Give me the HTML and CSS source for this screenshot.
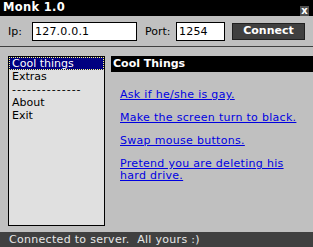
FILE: index.html
```html
<!DOCTYPE html>
<html lang="en">

<head>
  <meta charset="UTF-8" />
  <title>Monk 1.0</title>
  <link rel="stylesheet" href="styles.css">
</head>

<body>
  <div class="window">
    <header class="titlebar">
      <span class="title">Monk 1.0</span>
      <span class="close">x</span>
    </header>

    <form class="toolbar">
      <label for="ip" class="lbl-ip">Ip:</label>
      <input type="text" id="ip" class="field field-ip" value="127.0.0.1" />
      <label for="port" class="lbl-port">Port:</label>
      <input type="text" id="port" class="field field-port" value="1254" />
      <button type="button" class="connect">Connect</button>
    </form>

    <main class="main">
      <ul class="menu">
        <li class="selected">Cool things</li>
        <li>Extras</li>
        <li class="divider">--------------</li>
        <li>About</li>
        <li>Exit</li>
      </ul>

      <section class="panel">
        <h2>Cool Things</h2>
        <div class="links">
          <a href="#">Ask if he/she is gay.</a>
          <a href="#">Make the screen turn to black.</a>
          <a href="#">Swap mouse buttons.</a>
          <a href="#">Pretend you are deleting his hard drive.</a>
        </div>
      </section>
    </main>

    <footer class="status">Connected to server.&nbsp; All yours :)</footer>
  </div>
</body>

</html>
```

FILE: styles.css
```css
:root {
  --gray: #c0c0c0;
  --dark: #404040;
  --list-bg: #e0e0e0;
  --navy: #000080;
  --link: #0000e0;
  --font: "DejaVu Sans", Verdana, sans-serif;
}

* {
  box-sizing: border-box;
}

body {
  margin: 0;
  font-family: var(--font);
  font-size: 11px;
}

.window {
  width: 313px;
  height: 247px;
  background: var(--gray);
  display: flex;
  flex-direction: column;
}

/* Title bar */
.titlebar {
  height: 16px;
  background: #000;
  color: #fff;
  display: flex;
  justify-content: space-between;
  padding: 0 4px 0 3px;
}

.title {
  font-weight: 700;
  font-size: 11.5px;
  letter-spacing: 0.3px;
  line-height: 15px;
}

.close {
  align-self: flex-end;
  width: 9px;
  height: 10px;
  background: #505050;
  color: #fff;
  font-weight: 700;
  font-size: 10px;
  line-height: 9px;
  text-align: center;
}

/* Connection bar */
.toolbar {
  height: 31px;
  border-bottom: 1px solid var(--dark);
  display: flex;
  align-items: center;
  padding: 0 8px;
  margin: 0;
}

.toolbar label {
  color: #000;
}

.lbl-ip {
  width: 24px;
}

.lbl-port {
  margin-left: 8px;
  width: 31px;
}

.field {
  height: 19px;
  border: 1px solid #000;
  background: #fff;
  font-family: var(--font);
  font-size: 11px;
  letter-spacing: 0.2px;
  padding: 1px 2px 0;
  margin: 0;
  color: #000;
}

.field-ip {
  width: 105px;
}

.field-port {
  width: 49px;
}

.connect {
  margin-left: 7px;
  width: 73px;
  height: 17px;
  background: var(--dark);
  color: #fff;
  border: 1px solid #202020;
  font-family: var(--font);
  font-weight: 700;
  font-size: 11px;
  padding: 0;
  line-height: 14px;
}

/* Body */
.main {
  flex: 1;
  display: flex;
  padding: 9px 0 6px 8px;
}

.menu {
  width: 97px;
  margin: 0;
  padding: 0;
  list-style: none;
  background: var(--list-bg);
  border: 1px solid #000;
}

.menu li {
  line-height: 13px;
  height: 13px;
  padding-left: 3px;
  color: #000;
}

.menu li.selected {
  background: var(--navy);
  color: #fff;
  outline: 1px dotted #ffff80;
  outline-offset: -1px;
}

.menu li.divider {
  letter-spacing: 1px;
}

.panel {
  flex: 1;
  margin-left: 6px;
}

.panel h2 {
  margin: 0;
  height: 16px;
  background: #000;
  color: #fff;
  font-size: 11px;
  font-weight: 700;
  line-height: 16px;
  padding-left: 2px;
}

.links {
  display: flex;
  flex-direction: column;
  align-items: flex-start;
  gap: 11px;
  padding: 17px 13px 0 9px;
}

.links a {
  color: var(--link);
  line-height: 12px;
  letter-spacing: 0.3px;
}

/* Status bar */
.status {
  height: 15px;
  background: var(--dark);
  color: #e8e8e8;
  padding-left: 9px;
  line-height: 15px;
  letter-spacing: 0.3px;
}
```
